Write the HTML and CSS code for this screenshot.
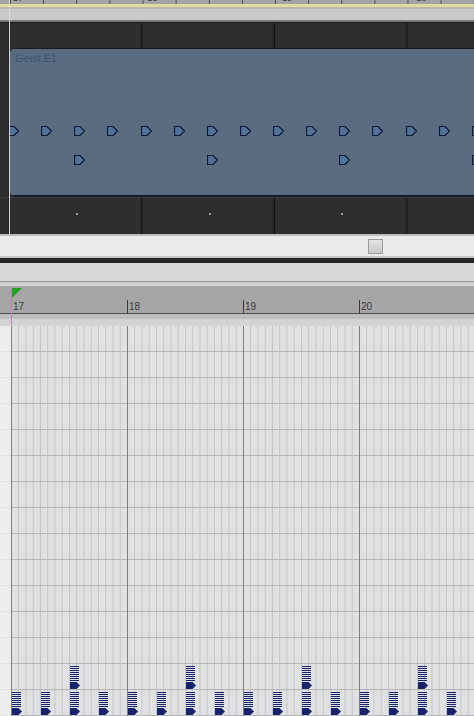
FILE: index.html
```html
<!DOCTYPE html>
<html lang="en">
<head>
    <meta charset="UTF-8">
    <title>Arrange / Key Editor</title>
    <link rel="stylesheet" href="styles.css">
</head>
<body>
    <div class="arranger">
        <div class="top-ruler">
            <span class="top-num">17</span>
            <span class="top-num">18</span>
            <span class="top-num">19</span>
            <span class="top-num">20</span>
        </div>
        <div class="top-yellow"></div>
        <div class="top-sep"></div>
        <div class="top-strip"></div>
        <div class="top-line"></div>

        <div class="track track-upper"></div>

        <div class="track track-clip">
            <div class="clip">
                <span class="clip-name">Geist.E1</span>
                <div class="clip-row row-hits">
                    <span class="hit"><svg width="12" height="10" viewBox="0 0 12 10"><path d="M0.5 0.5 H6 L10.5 5 L6 9.5 H0.5 Z"/></svg></span>
                    <span class="hit"><svg width="12" height="10" viewBox="0 0 12 10"><path d="M0.5 0.5 H6 L10.5 5 L6 9.5 H0.5 Z"/></svg></span>
                    <span class="hit"><svg width="12" height="10" viewBox="0 0 12 10"><path d="M0.5 0.5 H6 L10.5 5 L6 9.5 H0.5 Z"/></svg></span>
                    <span class="hit"><svg width="12" height="10" viewBox="0 0 12 10"><path d="M0.5 0.5 H6 L10.5 5 L6 9.5 H0.5 Z"/></svg></span>
                    <span class="hit"><svg width="12" height="10" viewBox="0 0 12 10"><path d="M0.5 0.5 H6 L10.5 5 L6 9.5 H0.5 Z"/></svg></span>
                    <span class="hit"><svg width="12" height="10" viewBox="0 0 12 10"><path d="M0.5 0.5 H6 L10.5 5 L6 9.5 H0.5 Z"/></svg></span>
                    <span class="hit"><svg width="12" height="10" viewBox="0 0 12 10"><path d="M0.5 0.5 H6 L10.5 5 L6 9.5 H0.5 Z"/></svg></span>
                    <span class="hit"><svg width="12" height="10" viewBox="0 0 12 10"><path d="M0.5 0.5 H6 L10.5 5 L6 9.5 H0.5 Z"/></svg></span>
                    <span class="hit"><svg width="12" height="10" viewBox="0 0 12 10"><path d="M0.5 0.5 H6 L10.5 5 L6 9.5 H0.5 Z"/></svg></span>
                    <span class="hit"><svg width="12" height="10" viewBox="0 0 12 10"><path d="M0.5 0.5 H6 L10.5 5 L6 9.5 H0.5 Z"/></svg></span>
                    <span class="hit"><svg width="12" height="10" viewBox="0 0 12 10"><path d="M0.5 0.5 H6 L10.5 5 L6 9.5 H0.5 Z"/></svg></span>
                    <span class="hit"><svg width="12" height="10" viewBox="0 0 12 10"><path d="M0.5 0.5 H6 L10.5 5 L6 9.5 H0.5 Z"/></svg></span>
                    <span class="hit"><svg width="12" height="10" viewBox="0 0 12 10"><path d="M0.5 0.5 H6 L10.5 5 L6 9.5 H0.5 Z"/></svg></span>
                    <span class="hit"><svg width="12" height="10" viewBox="0 0 12 10"><path d="M0.5 0.5 H6 L10.5 5 L6 9.5 H0.5 Z"/></svg></span>
                    <span class="hit"><svg width="12" height="10" viewBox="0 0 12 10"><path d="M0.5 0.5 H6 L10.5 5 L6 9.5 H0.5 Z"/></svg></span>
                </div>
                <div class="clip-row row-accents">
                    <span class="hit wide"><svg width="12" height="10" viewBox="0 0 12 10"><path d="M0.5 0.5 H6 L10.5 5 L6 9.5 H0.5 Z"/></svg></span>
                    <span class="hit wide"><svg width="12" height="10" viewBox="0 0 12 10"><path d="M0.5 0.5 H6 L10.5 5 L6 9.5 H0.5 Z"/></svg></span>
                    <span class="hit wide"><svg width="12" height="10" viewBox="0 0 12 10"><path d="M0.5 0.5 H6 L10.5 5 L6 9.5 H0.5 Z"/></svg></span>
                    <span class="hit wide"><svg width="12" height="10" viewBox="0 0 12 10"><path d="M0.5 0.5 H6 L10.5 5 L6 9.5 H0.5 Z"/></svg></span>
                </div>
            </div>
        </div>

        <div class="track track-lower">
            <span class="mark"></span>
            <span class="mark"></span>
            <span class="mark"></span>
        </div>

        <div class="cursor"></div>
    </div>

    <div class="scrollbar">
        <div class="thumb"></div>
    </div>
    <div class="splitter"></div>
    <div class="pane-head"></div>

    <div class="editor">
        <div class="ruler">
            <div class="ruler-bars">
                <span class="bar">17</span>
                <span class="bar">18</span>
                <span class="bar">19</span>
                <span class="bar">20</span>
            </div>
            <div class="locator"></div>
            <div class="playhead"></div>
        </div>
        <div class="ruler-foot"></div>

        <div class="grid">
            <div class="keys"></div>
            <div class="roll">
                <div class="note" style="left:1px;top:366px"></div>
                <div class="note" style="left:30px;top:366px"></div>
                <div class="note" style="left:59px;top:366px"></div>
                <div class="note" style="left:88px;top:366px"></div>
                <div class="note" style="left:117px;top:366px"></div>
                <div class="note" style="left:146px;top:366px"></div>
                <div class="note" style="left:175px;top:366px"></div>
                <div class="note" style="left:204px;top:366px"></div>
                <div class="note" style="left:233px;top:366px"></div>
                <div class="note" style="left:262px;top:366px"></div>
                <div class="note" style="left:291px;top:366px"></div>
                <div class="note" style="left:320px;top:366px"></div>
                <div class="note" style="left:349px;top:366px"></div>
                <div class="note" style="left:378px;top:366px"></div>
                <div class="note" style="left:407px;top:366px"></div>
                <div class="note" style="left:436px;top:366px"></div>
                <div class="note" style="left:59px;top:340px"></div>
                <div class="note" style="left:175px;top:340px"></div>
                <div class="note" style="left:291px;top:340px"></div>
                <div class="note" style="left:407px;top:340px"></div>
            </div>
        </div>
    </div>
</body>
</html>
```

FILE: styles.css
```css
:root {
    --track-color: #2e2e2e;
    --clip-color: #5a6d80;
    --clip-edge: #141a24;
    --grid-color: #e0e1e2;
    --note-color: #17236a;
}

body {
    margin: 0;
    padding: 0;
    width: 474px;
    height: 716px;
    overflow: hidden;
    background-color: #d6d6d6;
    font-family: "Liberation Sans", Arial, sans-serif;
}

/* ---------- arrange window ---------- */

.arranger {
    position: relative;
    display: flex;
    flex-direction: column;
}

.top-ruler {
    height: 4px;
    overflow: hidden;
    display: flex;
    padding-left: 11px;
    background-color: #a4a4a4;
    background-image: linear-gradient(to right, #4c4c4c 1px, transparent 1px);
    background-size: 33.125px 100%;
    background-position: 10px 0;
}

.top-num {
    flex: 0 0 132.5px;
    font-size: 9px;
    line-height: 9px;
    margin-top: -6px;
    padding-left: 2px;
    color: #3a3a3a;
}

.top-yellow {
    height: 3px;
    background-color: #dcdc9c;
}

.top-sep {
    height: 2px;
    background-color: #b8b8b0;
}

.top-strip {
    height: 11px;
    background-color: #cacaca;
}

.top-line {
    height: 2px;
    background-color: #7a7a7a;
}

.track {
    background-color: var(--track-color);
    background-image: linear-gradient(to right, transparent 131px, #262626 131px, #262626 132px, #111 132px);
    background-size: 132.5px 100%;
    background-position: 10px 0;
    background-repeat: repeat-x;
}

.track-upper {
    height: 25px;
    border-top: 1px solid #1c1c1c;
}

.track-clip {
    height: 149px;
    padding-left: 10px;
    display: flex;
}

.clip {
    flex: 1;
    position: relative;
    overflow: hidden;
    background-color: var(--clip-color);
    border-top: 1px solid var(--clip-edge);
    border-bottom: 2px solid var(--clip-edge);
    clip-path: polygon(4px 0, 100% 0, 100% 100%, 4px 100%, 0 calc(100% - 4px), 0 4px);
}

.clip-name {
    display: block;
    padding: 3px 0 0 5px;
    font-size: 11px;
    line-height: 12px;
    color: #3b536c;
}

.clip-row {
    display: flex;
}

.row-hits {
    margin: 62px 0 0 -2px;
}

.row-accents {
    margin: 19px 0 0 64px;
}

.hit {
    flex: 0 0 33.125px;
    height: 10px;
}

.hit.wide {
    flex-basis: 132.5px;
}

.hit svg {
    display: block;
    fill: #52729a;
    stroke: #0c1a36;
    stroke-width: 1.2;
}

.track-lower {
    height: 36px;
    display: flex;
    padding-left: 76px;
    border-top: 1px solid #3c3c3c;
}

.mark {
    flex: 0 0 132.5px;
    height: 2px;
    margin-top: 15px;
    background-image: linear-gradient(to right, #9a9a9a 2px, transparent 2px);
}

.cursor {
    position: absolute;
    left: 9px;
    top: 0;
    bottom: 0;
    width: 1px;
    background-color: #d8d8d8;
}

.scrollbar {
    height: 20px;
    background-color: #ebebeb;
    border-top: 2px solid #bdbdbd;
    border-bottom: 2px solid #c6c6c6;
    display: flex;
    align-items: center;
    padding-left: 368px;
}

.thumb {
    width: 13px;
    height: 13px;
    border: 1px solid #9c9c9c;
    background: linear-gradient(#e4e4e4, #c8c8c8);
}

.splitter {
    height: 5px;
    background-color: #262626;
}

.pane-head {
    height: 18px;
    background-color: #d8d8d8;
    border-bottom: 1px solid #9a9a9a;
    box-shadow: 0 2px 0 #cfcfcf;
}

/* ---------- key editor ---------- */

.editor {
    margin-top: 4px;
}

.ruler {
    position: relative;
    height: 27px;
    background-color: #a6a6a6;
    border-bottom: 1px solid #4a4a4a;
}

.ruler-bars {
    display: flex;
    padding: 14px 0 0 11px;
}

.bar {
    flex: 0 0 116px;
    height: 13px;
    box-sizing: border-box;
    border-left: 1px solid #3a3a3a;
    padding: 2px 0 0 1px;
    font-size: 10px;
    line-height: 10px;
    color: #3a3a3a;
}

.locator {
    position: absolute;
    left: 12px;
    top: 2px;
    width: 0;
    height: 0;
    border-top: 10px solid #22a022;
    border-right: 10px solid transparent;
}

.playhead {
    position: absolute;
    left: 11px;
    top: 2px;
    bottom: -12px;
    width: 1px;
    background-color: #c87ec8;
}

.ruler-foot {
    height: 12px;
    background: linear-gradient(#bdbdbd 40%, #d4d4d4 40%);
}

.grid {
    display: flex;
    height: 390px;
    background-image: linear-gradient(to bottom, transparent 25px, #b7b7b7 25px);
    background-size: 100% 26px;
}

.keys {
    flex: 0 0 11px;
    background-color: rgba(246, 246, 246, 0.7);
}

.roll {
    flex: 1;
    position: relative;
    background-color: var(--grid-color);
    background-image:
        linear-gradient(to right, #7e7e7e 1px, transparent 1px),
        linear-gradient(to bottom, transparent 25px, #b7b7b7 25px),
        linear-gradient(to right, #c2c3c4 1px, transparent 1px);
    background-size: 116px 100%, 100% 26px, 7.25px 100%;
}

.note {
    position: absolute;
    width: 11px;
    height: 24px;
}

.note::before {
    content: "";
    display: block;
    width: 9px;
    height: 15px;
    background-image: linear-gradient(to bottom, var(--note-color) 1px, #5a64a0 1px, #5a64a0 1.4px, transparent 1.4px);
    background-size: 100% 2px;
}

.note::after {
    content: "";
    display: block;
    width: 10px;
    height: 7px;
    margin-top: 1px;
    background-color: var(--note-color);
    clip-path: polygon(0 0, 65% 0, 100% 50%, 65% 100%, 0 100%);
}
```
